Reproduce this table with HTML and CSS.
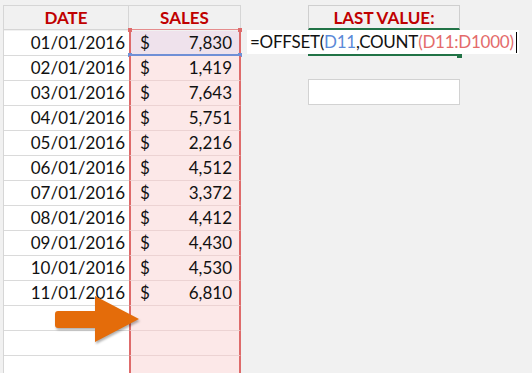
FILE: index.html
```html
<!DOCTYPE html>
<html>
<head>
<meta charset="utf-8">
<link rel="stylesheet" href="styles.css">
</head>
<body>
<div class="sheet">
  <div class="grid">
    <div class="hdr date-h">DATE</div>
    <div class="hdr sales-h">SALES</div>

    <div class="cell date">01/01/2016</div>
    <div class="cell sales sel"><span>$</span><span>7,830</span><i class="h h-tl"></i><i class="h h-tr"></i><i class="h h-bl"></i><i class="h h-br"></i></div>
    <div class="cell date">02/01/2016</div>
    <div class="cell sales"><span>$</span><span>1,419</span></div>
    <div class="cell date">03/01/2016</div>
    <div class="cell sales"><span>$</span><span>7,643</span></div>
    <div class="cell date">04/01/2016</div>
    <div class="cell sales"><span>$</span><span>5,751</span></div>
    <div class="cell date">05/01/2016</div>
    <div class="cell sales"><span>$</span><span>2,216</span></div>
    <div class="cell date">06/01/2016</div>
    <div class="cell sales"><span>$</span><span>4,512</span></div>
    <div class="cell date">07/01/2016</div>
    <div class="cell sales"><span>$</span><span>3,372</span></div>
    <div class="cell date">08/01/2016</div>
    <div class="cell sales"><span>$</span><span>4,412</span></div>
    <div class="cell date">09/01/2016</div>
    <div class="cell sales"><span>$</span><span>4,430</span></div>
    <div class="cell date">10/01/2016</div>
    <div class="cell sales"><span>$</span><span>4,530</span></div>
    <div class="cell date">11/01/2016</div>
    <div class="cell sales"><span>$</span><span>6,810</span></div>
    <div class="cell date"></div>
    <div class="cell sales"></div>
    <div class="cell date"></div>
    <div class="cell sales"></div>
    <div class="cell date"></div>
    <div class="cell sales"></div>
  </div>

  <div class="side">
    <div class="lv-row"><div class="lv">LAST VALUE:</div></div>
    <div class="edit">=OFFSET(<span class="ref-b">D11</span>,COUNT<span class="ref-r">(D11:D1000)</span><span class="caret"></span></div>
    <div class="lv-row"><div class="green-under"></div></div>
    <div class="lv-row gap"><div class="empty-box"></div></div>
  </div>
</div>

<svg class="arrow" width="100" height="60" viewBox="0 0 100 60">
  <path d="M8 20 Q5 20 5 23 L5 34 Q5 37 8 37 L45 37 L45 51 L89 28 L45 5 L45 20 Z" fill="#e46c0a"/>
</svg>
</body>
</html>
```

FILE: styles.css
```css
html, body {
  margin: 0;
  padding: 0;
  background: #f1f1f1;
  overflow: hidden;
  width: 532px;
  height: 373px;
}

body {
  font-family: Lato, "Open Sans", sans-serif;
  font-size: 17px;
  color: #111;
  position: relative;
}

.sheet {
  display: flex;
  align-items: flex-start;
  padding: 5px 0 0 3px;
}

.grid {
  display: grid;
  grid-template-columns: 125px 112px;
  grid-auto-rows: 25px;
  border-top: 1px solid #d6d6d6;
  border-left: 1px solid #d6d6d6;
  width: 237px;
}

.hdr {
  box-sizing: border-box;
  height: 24px;
  border-bottom: 1px solid #d6d6d6;
  font-weight: 700;
  color: #c00000;
  text-align: center;
  line-height: 24px;
}

.date-h {
  border-right: 1px solid #d6d6d6;
}

.sales-h {
  border-right: 1px solid #d6d6d6;
  border-bottom-color: #e58d8d;
}

.cell {
  box-sizing: border-box;
  height: 25px;
  line-height: 24px;
  border-bottom: 1px solid #dadada;
}

.date {
  background: #fff;
  text-align: right;
  padding-right: 4px;
}

.sales {
  position: relative;
  background: #fce8e8;
  border-left: 2px solid #de6b6b;
  border-right: 2px solid #de6b6b;
  border-bottom-color: #ecd3d3;
  display: flex;
  justify-content: space-between;
  padding: 0 7px 0 9px;
}

.sales.sel {
  background: #efe2ec;
  border-bottom: 2px solid #6f8fd6;
  height: 25px;
}

.h {
  position: absolute;
  width: 4px;
  height: 4px;
}

.h-tl { left: -3px; top: -3px; background: #de6b6b; }
.h-tr { right: -3px; top: -3px; background: #de6b6b; }
.h-bl { left: -3px; bottom: -3px; background: #6f8fd6; }
.h-br { right: -3px; bottom: -3px; background: #6f8fd6; }

.side {
  display: flex;
  flex-direction: column;
  width: 272px;
  margin-left: 6px;
}

.lv-row {
  padding-left: 61px;
}

.lv {
  box-sizing: border-box;
  width: 152px;
  height: 25px;
  border: 1px solid #cfcfcf;
  border-bottom: 2px solid #217346;
  text-align: center;
  font-weight: 700;
  color: #c00000;
  line-height: 23px;
}

.edit {
  background: #fff;
  height: 24px;
  line-height: 24px;
  padding-left: 3px;
  white-space: nowrap;
  display: flex;
  align-items: center;
  letter-spacing: -0.25px;
  overflow: hidden;
}

.ref-b { color: #5b8ad8; }
.ref-r { color: #e46b6b; }

.caret {
  display: inline-block;
  flex: none;
  width: 1px;
  height: 21px;
  background: #000;
  margin-left: 2px;
}

.green-under {
  position: relative;
  width: 152px;
  height: 2px;
  background: #217346;
}

.green-under::after {
  content: "";
  position: absolute;
  right: -2px;
  top: 0;
  width: 5px;
  height: 4px;
  background: #217346;
}

.gap {
  padding-top: 23px;
}

.empty-box {
  box-sizing: border-box;
  width: 152px;
  height: 26px;
  background: #fff;
  border: 1px solid #d2d2d2;
}

.arrow {
  position: absolute;
  left: 50px;
  top: 291px;
  filter: drop-shadow(1px 2px 1px rgba(0, 0, 0, 0.3));
}
```
